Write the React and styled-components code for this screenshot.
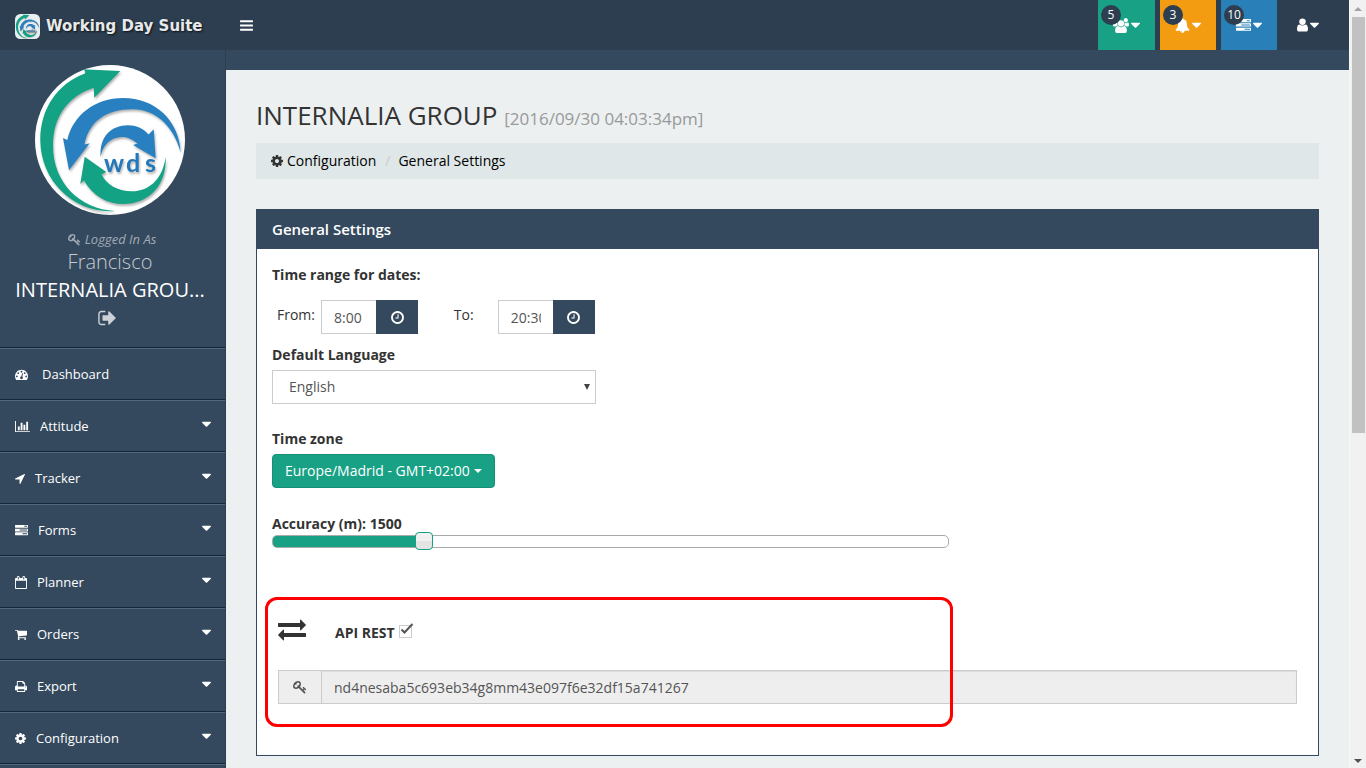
import React, { useState } from "react";
import styled, { createGlobalStyle } from "styled-components";

const GlobalStyle = createGlobalStyle`
  *, *::before, *::after { box-sizing: border-box; }
  body {
    margin: 0;
    background: #34495e;
    color: #333;
    font: 14px/20px "Open Sans", sans-serif;
  }
  h1, h2, p, ul, ol { margin: 0; padding: 0; }
  ul, ol { list-style: none; }
  a { color: inherit; text-decoration: none; }
  button, input, select { font: inherit; }
`;

/* Each glyph: [left edge, advance width, path] on a grid 1792 units high. */
const GLYPHS = {
  bars: [128, 1536, "M1664 1344v128q0 26-19 45t-45 19h-1408q-26 0-45-19t-19-45v-128q0-26 19-45t45-19h1408q26 0 45 19t19 45zm0-512v128q0 26-19 45t-45 19h-1408q-26 0-45-19t-19-45v-128q0-26 19-45t45-19h1408q26 0 45 19t19 45zm0-512v128q0 26-19 45t-45 19h-1408q-26 0-45-19t-19-45v-128q0-26 19-45t45-19h1408q26 0 45 19t19 45z"],
  caret: [384, 1024, "M1408 704q0 26-19 45l-448 448q-19 19-45 19t-45-19l-448-448q-19-19-19-45t19-45 45-19h896q26 0 45 19t19 45z"],
  user: [256, 1280, "M1536 1399q0 109-62.5 187t-150.5 78h-854q-88 0-150.5-78t-62.5-187q0-85 8.5-160.5t31.5-152 58.5-131 94-89 134.5-34.5q131 128 313 128t313-128q76 0 134.5 34.5t94 89 58.5 131 31.5 152 8.5 160.5zm-256-887q0 159-112.5 271.5t-271.5 112.5-271.5-112.5-112.5-271.5 112.5-271.5 271.5-112.5 271.5 112.5 112.5 271.5z"],
  tasks: [0, 1792, "M1024 1408h640v-128h-640v128zm-384-512h1024v-128h-1024v128zm640-512h384v-128h-384v128zm512 832v256q0 26-19 45t-45 19h-1664q-26 0-45-19t-19-45v-256q0-26 19-45t45-19h1664q26 0 45 19t19 45zm0-512v256q0 26-19 45t-45 19h-1664q-26 0-45-19t-19-45v-256q0-26 19-45t45-19h1664q26 0 45 19t19 45zm0-512v256q0 26-19 45t-45 19h-1664q-26 0-45-19t-19-45v-256q0-26 19-45t45-19h1664q26 0 45 19t19 45z"],
  gauge: [0, 1792, "M384 1152q0-53-37.5-90.5t-90.5-37.5-90.5 37.5-37.5 90.5 37.5 90.5 90.5 37.5 90.5-37.5 37.5-90.5zm192-448q0-53-37.5-90.5t-90.5-37.5-90.5 37.5-37.5 90.5 37.5 90.5 90.5 37.5 90.5-37.5 37.5-90.5zm428 481l101-382q6-26-7.5-48.5t-38.5-29.5-48 6.5-30 39.5l-101 382q-60 5-107 43.5t-63 98.5q-20 77 20 146t117 89 146-20 89-117q16-60-6-117t-72-91zm660-33q0-53-37.5-90.5t-90.5-37.5-90.5 37.5-37.5 90.5 37.5 90.5 90.5 37.5 90.5-37.5 37.5-90.5zm-640-640q0-53-37.5-90.5t-90.5-37.5-90.5 37.5-37.5 90.5 37.5 90.5 90.5 37.5 90.5-37.5 37.5-90.5zm448 192q0-53-37.5-90.5t-90.5-37.5-90.5 37.5-37.5 90.5 37.5 90.5 90.5 37.5 90.5-37.5 37.5-90.5zm320 448q0 261-141 483-19 29-54 29h-1402q-35 0-54-29-141-221-141-483 0-182 71-348t191-286 286-191 348-71 348 71 286 191 191 286 71 348z"],
  chart: [0, 2048, "M640 896v512h-256v-512h256zm384-512v1024h-256v-1024h256zm1024 1152v128h-2048v-1536h128v1408h1920zm-640-896v768h-256v-768h256zm384-384v1152h-256v-1152h256z"],
  arrow: [192, 1408, "M1593 349l-640 1280q-17 35-57 35-5 0-15-2-22-5-35.5-22.5t-13.5-39.5v-576h-576q-22 0-39.5-13.5t-22.5-35.5 4-42 29-30l1280-640q13-7 29-7 27 0 45 19 15 14 18.5 34.5t-6.5 39.5z"],
  calendar: [64, 1664, "M192 1664h1408v-1024h-1408v1024zm384-1216v-288q0-14-9-23t-23-9h-64q-14 0-23 9t-9 23v288q0 14 9 23t23 9h64q14 0 23-9t9-23zm768 0v-288q0-14-9-23t-23-9h-64q-14 0-23 9t-9 23v288q0 14 9 23t23 9h64q14 0 23-9t9-23zm384-64v1280q0 52-38 90t-90 38h-1408q-52 0-90-38t-38-90v-1280q0-52 38-90t90-38h128v-96q0-66 47-113t113-47h64q66 0 113 47t47 113v96h384v-96q0-66 47-113t113-47h64q66 0 113 47t47 113v96h128q52 0 90 38t38 90z"],
  cart: [64, 1664, "M704 1536q0 52-38 90t-90 38-90-38-38-90 38-90 90-38 90 38 38 90zm896 0q0 52-38 90t-90 38-90-38-38-90 38-90 90-38 90 38 38 90zm128-1088v512q0 24-16.5 42.5t-40.5 21.5l-1044 122q13 60 13 70 0 16-24 64h920q26 0 45 19t19 45-19 45-45 19h-1024q-26 0-45-19t-19-45q0-11 8-31.5t16-36 21.5-40 15.5-29.5l-177-823h-204q-26 0-45-19t-19-45 19-45 45-19h256q16 0 28.5 6.5t19.5 15.5 13 24.5 8 26 5.5 29.5 4.5 26h1201q26 0 45 19t19 45z"],
  print: [64, 1664, "M448 1536h896v-256h-896v256zm0-640h896v-384h-160q-40 0-68-28t-28-68v-160h-640v640zm1152 64q0-26-19-45t-45-19-45 19-19 45 19 45 45 19 45-19 19-45zm128 0v416q0 13-9.5 22.5t-22.5 9.5h-224v160q0 40-28 68t-68 28h-960q-40 0-68-28t-28-68v-160h-224q-13 0-22.5-9.5t-9.5-22.5v-416q0-79 56.5-135.5t135.5-56.5h64v-544q0-40 28-68t68-28h672q40 0 88 20t76 48l152 152q28 28 48 76t20 88v256h64q79 0 135.5 56.5t56.5 135.5z"],
  cog: [128, 1536, "M1152 896q0-106-75-181t-181-75-181 75-75 181 75 181 181 75 181-75 75-181zm512-109v222q0 12-8 23t-20 13l-185 28q-19 54-39 91 35 50 107 138 10 12 10 25t-9 23q-27 37-99 108t-94 71q-12 0-26-9l-138-108q-44 23-91 38-16 136-29 186-7 28-36 28h-222q-14 0-24.5-8.5t-11.5-21.5l-28-184q-49-16-90-37l-141 107q-10 9-25 9-14 0-25-11-126-114-165-168-7-10-7-23 0-12 8-23 15-21 51-66.5t54-70.5q-27-50-41-99l-183-27q-13-2-21-12.5t-8-23.5v-222q0-12 8-23t19-13l186-28q14-46 39-92-40-57-107-138-10-12-10-24 0-10 9-23 26-36 98.5-107.5t94.5-71.5q13 0 26 10l138 107q44-23 91-38 16-136 29-186 7-28 36-28h222q14 0 24.5 8.5t11.5 21.5l28 184q49 16 90 37l142-107q9-9 24-9 13 0 25 10 129 119 165 170 7 8 7 22 0 12-8 23-15 21-51 66.5t-54 70.5q26 50 41 98l183 28q13 2 21 12.5t8 23.5z"],
  exchange: [0, 1792, "M1792 1184v192q0 13-9.5 22.5t-22.5 9.5h-1376v192q0 13-9.5 22.5t-22.5 9.5q-12 0-24-10l-319-320q-9-9-9-22 0-14 9-23l320-320q9-9 23-9 13 0 22.5 9.5t9.5 22.5v192h1376q13 0 22.5 9.5t9.5 22.5zm0-544q0 14-9 23l-320 320q-9 9-23 9-13 0-22.5-9.5t-9.5-22.5v-192h-1376q-13 0-22.5-9.5t-9.5-22.5v-192q0-13 9.5-22.5t22.5-9.5h1376v-192q0-14 9-23t23-9q12 0 24 10l319 319q9 9 9 23z"],
  signOut: [64, 1664, "M704 1440q0 4 1 20t.5 26.5-3 23.5-10 19.5-20.5 6.5h-320q-119 0-203.5-84.5t-84.5-203.5v-704q0-119 84.5-203.5t203.5-84.5h320q13 0 22.5 9.5t9.5 22.5q0 4 1 20t.5 26.5-3 23.5-10 19.5-20.5 6.5h-320q-66 0-113 47t-47 113v704q0 66 47 113t113 47h312l11.5 1 11.5 3 8 5.5 7 9 2 13.5zm928-544q0 26-19 45l-544 544q-19 19-45 19t-45-19-19-45v-288h-448q-26 0-45-19t-19-45v-384q0-26 19-45t45-19h448v-288q0-26 19-45t45-19 45 19l544 544q19 19 19 45z"],
  bell: [0, 1792, "M912 1696q0-16-16-16-59 0-101.5-42.5t-42.5-101.5q0-16-16-16t-16 16q0 73 51.5 124.5t124.5 51.5q16 0 16-16zm816-288q0 52-38 90t-90 38h-448q0 106-75 181t-181 75-181-75-75-181h-448q-52 0-90-38t-38-90q50-42 91-88t85-119.5 74.5-158.5 50-206 19.5-260q0-152 117-282.5t307-158.5q-8-19-8-39 0-40 28-68t68-28 68 28 28 68q0 20-8 39 190 28 307 158.5t117 282.5q0 139 19.5 260t50 206 74.5 158.5 85 119.5 91 88z"],
  key: [0, 1792, "M832 512q0-80-56-136t-136-56-136 56-56 136q0 42 19 83-41-19-83-19-80 0-136 56t-56 136 56 136 136 56 136-56 56-136q0-42-19-83 41 19 83 19 80 0 136-56t56-136zm851 704q0 17-49 66t-66 49q-9 0-28.5-16t-36.5-33-38.5-40-24.5-26l-96 96 220 220q28 28 28 68 0 42-39 81t-81 39q-40 0-68-28l-671-671q-176 131-365 131-163 0-265.5-102.5t-102.5-265.5q0-160 95-313t248-248 313-95q163 0 265.5 102.5t102.5 265.5q0 189-131 365l355 355 96-96q-3-3-26-24.5t-40-38.5-33-36.5-16-28.5q0-17 49-66t66-49q13 0 23 10 6 6 46 44.5t82 79.5 86.5 86 73 78 28.5 41z"],
  clock: [128, 1536, "M1024 544v448q0 14-9 23t-23 9h-320q-14 0-23-9t-9-23v-64q0-14 9-23t23-9h224v-352q0-14 9-23t23-9h64q14 0 23 9t9 23zm416 352q0-148-73-273t-198-198-273-73-273 73-198 198-73 273 73 273 198 198 273 73 273-73 198-198 73-273zm224 0q0 209-103 385.5t-279.5 279.5-385.5 103-385.5-103-279.5-279.5-103-385.5 103-385.5 279.5-279.5 385.5-103 385.5 103 279.5 279.5 103 385.5z"],
  users: [64, 1920, "M657 896q-162 5-265 128h-134q-82 0-138-40.5t-56-118.5q0-353 124-353 6 0 43.5 21t97.5 42.5 119 21.5q67 0 133-23-5 37-5 66 0 139 81 256zm1071 637q0 120-73 189.5t-194 69.5h-874q-121 0-194-69.5t-73-189.5q0-53 3.5-103.5t14-109 26.5-108.5 43-97.5 62-81 85.5-53.5 111.5-20q10 0 43 21.5t73 48 107 48 135 21.5 135-21.5 107-48 73-48 43-21.5q61 0 111.5 20t85.5 53.5 62 81 43 97.5 26.5 108.5 14 109 3.5 103.5zm-1024-1277q0 106-75 181t-181 75-181-75-75-181 75-181 181-75 181 75 75 181zm704 384q0 159-112.5 271.5t-271.5 112.5-271.5-112.5-112.5-271.5 112.5-271.5 271.5-112.5 271.5 112.5 112.5 271.5zm576 225q0 78-56 118.5t-138 40.5h-134q-103-123-265-128 81-117 81-256 0-29-5-66 66 23 133 23 59 0 119-21.5t97.5-42.5 43.5-21q124 0 124 353zm-128-609q0 106-75 181t-181 75-181-75-75-181 75-181 181-75 181 75 75 181z"],
};

const Glyph = styled.svg`
  flex: none;
  display: block;
  fill: currentColor;
`;

function Icon({ name, size = 14 }) {
  const [x, w, d] = GLYPHS[name];
  return (
    <Glyph
      viewBox={`${x} 0 ${w} 1792`}
      width={Math.round((size * w) / 1792)}
      height={size}
      aria-hidden="true"
    >
      <path d={d} />
    </Glyph>
  );
}

const LogoArt = styled.g`
  filter: drop-shadow(1px 2px 1px rgba(0, 0, 0, 0.3));
`;

function LogoMark({ size, square }) {
  return (
    <Glyph viewBox="0 0 150 150" width={size} height={size} role="img" aria-label="wds">
      {square ? (
        <rect width="150" height="150" rx="32" fill="#e9eef0" />
      ) : (
        <circle cx="75" cy="75" r="75" fill="#fff" />
      )}
      <LogoArt>
        <path fill="#13a284" d="M85.3 6 46.7 4.3Q51 5 50 8.500C22 19 5 44 5.3 76 6 117 40 149 80 146 45 144 18 118 18 81 18 50 34 31 58.7 22.7L59.3 32.7Z" />
        <path fill="#2980c0" d="M34 105.3 28 73 32.3 75C38 50 60 33 88 33 120 33 144 55 145.7 87.3 138 60 120 44.3 98 44.3 72 44 54 56 49.5 79.5L54.7 78.3Z" />
        <path fill="#2980c0" d="M65.7 91.7C64 72 76 60.3 93 60.3 101 60.3 108 63 113.5 69.5L118.7 64.3 120.7 93.3 98 80 102.5 78.5C96 73 90 71.5 86 72 75 73 68 80 65.7 91.7Z" />
        <path fill="#13a284" d="M49.7 91.7 45.3 119 49 115.5C58 131 72 139 88 139 114 139 132 120 130.7 91.7 128 112 116 126 97 126.3 82 126 72 120 66.5 109.5L71.3 107Z" />
        <text
          x="69 91 110"
          y="107"
          fill="#2378bb"
          fontFamily="Lato, sans-serif"
          fontSize="25"
          fontWeight="700"
        >
          wds
        </text>
      </LogoArt>
    </Glyph>
  );
}

/* ---------- page frame ---------- */

const Frame = styled.div`
  display: grid;
  grid-template-columns: minmax(0, 1fr) 17px;
  height: 100vh;
  overflow: hidden;
`;

const Page = styled.div`
  display: flex;
  flex-direction: column;
  min-width: 0;
  min-height: 0;
`;

const Columns = styled.div`
  flex: 1;
  min-height: 0;
  display: grid;
  grid-template-columns: 226px minmax(0, 1fr);
`;

const ScrollRail = styled.div`
  display: flex;
  flex-direction: column;
  align-items: center;
  padding: 7px 0 5px;
  background: #f1f1f1;
  border-left: 1px solid #f8f8f8;
`;

const ScrollThumb = styled.div`
  width: 13px;
  height: 55%;
  margin: 6px 0 auto;
  background: #c1c1c1;
`;

const ScrollArrow = styled.span`
  border: 4px solid transparent;
  border-top-width: 0;
  border-bottom-color: ${(p) => (p.$down ? "#505050" : "#a3a3a3")};
  transform: ${(p) => (p.$down ? "rotate(180deg)" : "none")};
`;

/* ---------- header ---------- */

const Header = styled.header`
  flex: none;
  display: flex;
  align-items: center;
  height: 50px;
  padding: 0 15px;
  background: #2c3e50;
  color: #fff;
`;

const Brand = styled.a`
  display: flex;
  align-items: center;
  gap: 6px;
  width: 225px;
  padding-top: 2px;
  font: bold 15px/24px "DejaVu Sans", sans-serif;
  color: #e6eaec;
  text-shadow: 1px 1px 2px #111;
`;

const MenuButton = styled.button`
  display: flex;
  padding: 0;
  border: 0;
  background: none;
  color: #fff;
`;

const Alerts = styled.nav`
  display: flex;
  gap: 5px;
  height: 50px;
  margin-left: auto;
`;

const AlertButton = styled.button`
  position: relative;
  display: flex;
  align-items: center;
  gap: 2px;
  padding: 0 15px;
  border: 0;
  background: ${(p) => p.$color || "none"};
  color: #fff;
`;

const Badge = styled.span`
  position: absolute;
  top: 5px;
  left: 3px;
  width: 20px;
  border-radius: 50%;
  background: #2c3e50;
  font-size: 12px;
  line-height: 20px;
  text-align: center;
`;

/* ---------- sidebar ---------- */

const Sidebar = styled.aside`
  min-height: 0;
  overflow: hidden;
  border-right: 1px solid #2c3e50;
  background: #34495e;
  color: #fff;
`;

const Profile = styled.div`
  display: flex;
  flex-direction: column;
  align-items: center;
  height: 298px;
  padding: 15px 20px 0 15px;
`;

const LoggedAs = styled.p`
  display: flex;
  align-items: center;
  gap: 4px;
  margin-top: 14px;
  padding-left: 4px;
  color: #a1abb5;
  font-size: 13px;
  font-style: italic;
`;

const UserName = styled.p`
  color: #c5cbd2;
  font-size: 20px;
  font-weight: 300;
  line-height: 26px;
`;

const Company = styled.p`
  font-size: 20px;
  line-height: 30px;
  white-space: nowrap;
`;

const LogOut = styled.button`
  margin-top: 3px;
  padding: 0 5px 0 0;
  border: 0;
  background: none;
  color: #ccd1d7;
`;

const Menu = styled.ul`
  border-bottom: 1px solid #54677c;
`;

const MenuItem = styled.li`
  border-top: 1px solid #54677c;
  border-bottom: 1px solid #142638;
  &:first-child { box-shadow: 0 -1px #142638; }
`;

const MenuLink = styled.a`
  display: flex;
  align-items: center;
  gap: 10px;
  height: 50px;
  padding: 0 14px 0 15px;
  font-size: 13px;
`;

const MenuLabel = styled.span`
  flex: 1;
  padding-left: ${(p) => (p.$wide ? 4 : 0)}px;
`;

const MenuCaret = styled.span`
  padding-bottom: 4px;
`;

/* ---------- content ---------- */

const Main = styled.main`
  margin-top: 20px;
  padding: 30px 30px 0;
  background: #ecf0f1;
`;

const Title = styled.h1`
  font-size: 26px;
  font-weight: 400;
  line-height: 30px;
`;

const Stamp = styled.small`
  color: #999;
  font-size: 17px;
  line-height: 17px;
`;

const Breadcrumb = styled.ol`
  display: flex;
  align-items: center;
  height: 36px;
  margin: 13px 0 30px;
  padding: 0 15px;
  background: #dfe7e8;
  color: #000;
`;

const Crumb = styled.li`
  display: flex;
  align-items: center;
  gap: 4px;
  & + &::before {
    content: "/";
    padding: 0 4px 0 9px;
    color: #ccc;
  }
  svg { color: #333; }
`;

const Panel = styled.section`
  border: 1px solid #34495e;
  background: #fff;
`;

const PanelTitle = styled.h2`
  padding: 0 15px;
  background: #34495e;
  color: #fff;
  font-size: 15px;
  font-weight: 600;
  line-height: 39px;
`;

const PanelBody = styled.div`
  padding: 16px 0 51px;
`;

const Row = styled.div`
  display: flex;
  margin-top: ${(p) => p.$top || 0}px;
`;

const Column = styled.div`
  flex: none;
  width: calc(100% * ${(p) => p.$span} / 12);
  padding: 0 15px;
`;

const FieldLabel = styled.label`
  display: block;
  font-weight: 700;
  line-height: 20px;
`;

const TimeField = styled.div`
  display: flex;
  padding-left: 5px;
`;

const TimeLabel = styled.label`
  width: 44px;
  line-height: 30px;
`;

const TimeInput = styled.input`
  width: 55px;
  height: 34px;
  padding: 0 12px;
  border: 1px solid #ccc;
  border-right: 0;
  border-radius: 0;
  color: #555;
`;

const ClockButton = styled.button`
  display: flex;
  align-items: center;
  justify-content: center;
  width: 42px;
  height: 34px;
  padding: 0;
  border: 0;
  background: #34495e;
  color: #fff;
`;

const SelectBox = styled.div`
  position: relative;
  margin-top: 5px;
`;

const Select = styled.select`
  display: block;
  appearance: none;
  width: 100%;
  height: 34px;
  padding: 0 16px;
  border: 1px solid #ccc;
  border-radius: 0;
  background: #fff;
  color: #555;
`;

const SelectArrow = styled.span`
  position: absolute;
  top: 14px;
  right: 6px;
  border: 3px solid transparent;
  border-top: 6px solid #444;
  border-bottom: 0;
  pointer-events: none;
`;

const ZoneButton = styled.button`
  display: flex;
  align-items: center;
  gap: 4px;
  height: 34px;
  margin-top: 5px;
  padding: 0 12px;
  border: 1px solid #149077;
  border-radius: 4px;
  background: #18a185;
  color: #fff;
`;

const Caret = styled.span`
  border: 4px solid transparent;
  border-top-color: currentColor;
  border-bottom: 0;
`;

const Slider = styled.input`
  display: block;
  appearance: none;
  width: 100%;
  height: 18px;
  margin: -2px 0 0;
  background: none;
  &::-webkit-slider-runnable-track {
    height: 13px;
    border: 1px solid #aaa;
    border-radius: 5px;
    background: linear-gradient(#18a185, #18a185) 0 0 / 22% 100% no-repeat #fff;
  }
  &::-webkit-slider-thumb {
    appearance: none;
    width: 18px;
    height: 18px;
    margin-top: -4px;
    border: 1px solid #18a185;
    border-radius: 4px;
    background: linear-gradient(#f0f0f0 50%, #e4e4e4 50%);
  }
`;

const ApiSection = styled.div`
  position: relative;
  margin-top: 65px;
  padding: 0 21px;
`;

const ApiHead = styled.div`
  display: flex;
  align-items: center;
  gap: 29px;
  height: 28px;
`;

const CheckLabel = styled.label`
  position: relative;
  display: flex;
  align-items: center;
  gap: 4px;
  padding-top: 8px;
  font-weight: 700;
`;

const CheckInput = styled.input`
  appearance: none;
  width: 13px;
  height: 13px;
  margin: 0 2px 4px 0;
  border: 1px solid #ccc;
  background: #fff;
`;

const CheckMark = styled.svg`
  position: absolute;
  top: 8px;
  right: 0;
  pointer-events: none;
`;

const KeyGroup = styled.div`
  display: flex;
  height: 34px;
  margin-top: 27px;
  border: 1px solid #ccc;
  background: #eee;
  color: #555;
`;

const KeyAddon = styled.label`
  display: flex;
  align-items: center;
  justify-content: center;
  width: 43px;
  border-right: 1px solid #ccc;
`;

const KeyInput = styled.input`
  flex: 1;
  min-width: 0;
  padding: 2px 12px 0;
  border: 0;
  background: none;
  box-shadow: inset 0 1px 1px rgba(0, 0, 0, 0.08);
  color: #555;
`;

const Highlight = styled.div`
  position: absolute;
  top: -18px;
  left: 8px;
  width: calc(100% * 8 / 12 - 19px);
  height: 130px;
  border: 3px solid #f00;
  border-radius: 12px;
  pointer-events: none;
`;

const ALERTS = [
  { icon: "users", count: 5, color: "#18a185", label: "Users" },
  { icon: "bell", count: 3, color: "#f39c12", label: "Alerts" },
  { icon: "tasks", count: 10, color: "#2980b9", label: "Tasks" },
];

const MENU = [
  ["gauge", "Dashboard"],
  ["chart", "Attitude"],
  ["arrow", "Tracker"],
  ["tasks", "Forms"],
  ["calendar", "Planner"],
  ["cart", "Orders"],
  ["print", "Export"],
  ["cog", "Configuration"],
];

function TimePicker({ id, label, value }) {
  return (
    <TimeField>
      <TimeLabel htmlFor={id}>{label}</TimeLabel>
      <TimeInput id={id} defaultValue={value} />
      <ClockButton type="button" aria-label={`Pick time, ${label}`}>
        <Icon name="clock" size={15} />
      </ClockButton>
    </TimeField>
  );
}

export default function App() {
  const [accuracy, setAccuracy] = useState(1500);
  return (
    <Frame>
      <GlobalStyle />
      <Page>
        <Header>
          <Brand href="#">
            <LogoMark size={25} square />
            Working Day Suite
          </Brand>
          <MenuButton type="button" aria-label="Toggle menu">
            <Icon name="bars" size={15} />
          </MenuButton>
          <Alerts>
            {ALERTS.map((a) => (
              <AlertButton key={a.label} type="button" $color={a.color} aria-label={a.label}>
                <Icon name={a.icon} size={15} />
                <Icon name="caret" size={16} />
                <Badge>{a.count}</Badge>
              </AlertButton>
            ))}
            <AlertButton type="button" aria-label="Account">
              <Icon name="user" size={16} />
              <Icon name="caret" size={16} />
            </AlertButton>
          </Alerts>
        </Header>
        <Columns>
          <Sidebar>
            <Profile>
              <LogoMark size={150} />
              <LoggedAs>
                <Icon name="key" size={13} />
                Logged In As
              </LoggedAs>
              <UserName>Francisco</UserName>
              <Company>INTERNALIA GROU...</Company>
              <LogOut type="button" aria-label="Log out">
                <Icon name="signOut" size={20} />
              </LogOut>
            </Profile>
            <Menu>
              {MENU.map(([icon, label], i) => (
                <MenuItem key={label}>
                  <MenuLink href="#">
                    <Icon name={icon} size={13} />
                    <MenuLabel $wide={i === 0}>{label}</MenuLabel>
                    {i > 0 && (
                      <MenuCaret>
                        <Icon name="caret" size={16} />
                      </MenuCaret>
                    )}
                  </MenuLink>
                </MenuItem>
              ))}
            </Menu>
          </Sidebar>
          <Main>
            <Title>
              INTERNALIA GROUP <Stamp>[2016/09/30 04:03:34pm]</Stamp>
            </Title>
            <Breadcrumb>
              <Crumb>
                <Icon name="cog" size={14} />
                <a href="#">Configuration</a>
              </Crumb>
              <Crumb>
                <a href="#">General Settings</a>
              </Crumb>
            </Breadcrumb>
            <Panel>
              <PanelTitle>General Settings</PanelTitle>
              <PanelBody>
                <Row>
                  <Column $span={12}>
                    <FieldLabel as="p">Time range for dates:</FieldLabel>
                  </Column>
                </Row>
                <Row $top={15}>
                  <Column $span={2}>
                    <TimePicker id="from" label="From:" value="8:00" />
                  </Column>
                  <Column $span={2}>
                    <TimePicker id="to" label="To:" value="20:30" />
                  </Column>
                </Row>
                <Row $top={11}>
                  <Column $span={4}>
                    <FieldLabel htmlFor="language">Default Language</FieldLabel>
                    <SelectBox>
                      <Select id="language" defaultValue="English">
                        <option>English</option>
                      </Select>
                      <SelectArrow />
                    </SelectBox>
                  </Column>
                </Row>
                <Row $top={25}>
                  <Column $span={4}>
                    <FieldLabel htmlFor="zone">Time zone</FieldLabel>
                    <ZoneButton id="zone" type="button">
                      Europe/Madrid - GMT+02:00
                      <Caret />
                    </ZoneButton>
                  </Column>
                </Row>
                <Row $top={26}>
                  <Column $span={8}>
                    <FieldLabel htmlFor="accuracy">Accuracy (m): {accuracy}</FieldLabel>
                    <Slider
                      id="accuracy"
                      type="range"
                      min="100"
                      max="6600"
                      step="100"
                      value={accuracy}
                      onChange={(e) => setAccuracy(e.target.value)}
                    />
                  </Column>
                </Row>
                <ApiSection>
                  <ApiHead>
                    <Icon name="exchange" size={28} />
                    <CheckLabel>
                      API REST
                      <CheckInput type="checkbox" defaultChecked />
                      <CheckMark width="15" height="13" viewBox="0 0 15 13" fill="none" stroke="#555" strokeWidth="2">
                        <path d="M2.500 6.500L5.500 9.500L13.500 1" />
                      </CheckMark>
                    </CheckLabel>
                  </ApiHead>
                  <KeyGroup>
                    <KeyAddon htmlFor="apikey" aria-label="API key">
                      <Icon name="key" size={14} />
                    </KeyAddon>
                    <KeyInput id="apikey" readOnly value="nd4nesaba5c693eb34g8mm43e097f6e32df15a741267" />
                  </KeyGroup>
                  <Highlight />
                </ApiSection>
              </PanelBody>
            </Panel>
          </Main>
        </Columns>
      </Page>
      <ScrollRail aria-hidden="true">
        <ScrollArrow />
        <ScrollThumb />
        <ScrollArrow $down />
      </ScrollRail>
    </Frame>
  );
}
